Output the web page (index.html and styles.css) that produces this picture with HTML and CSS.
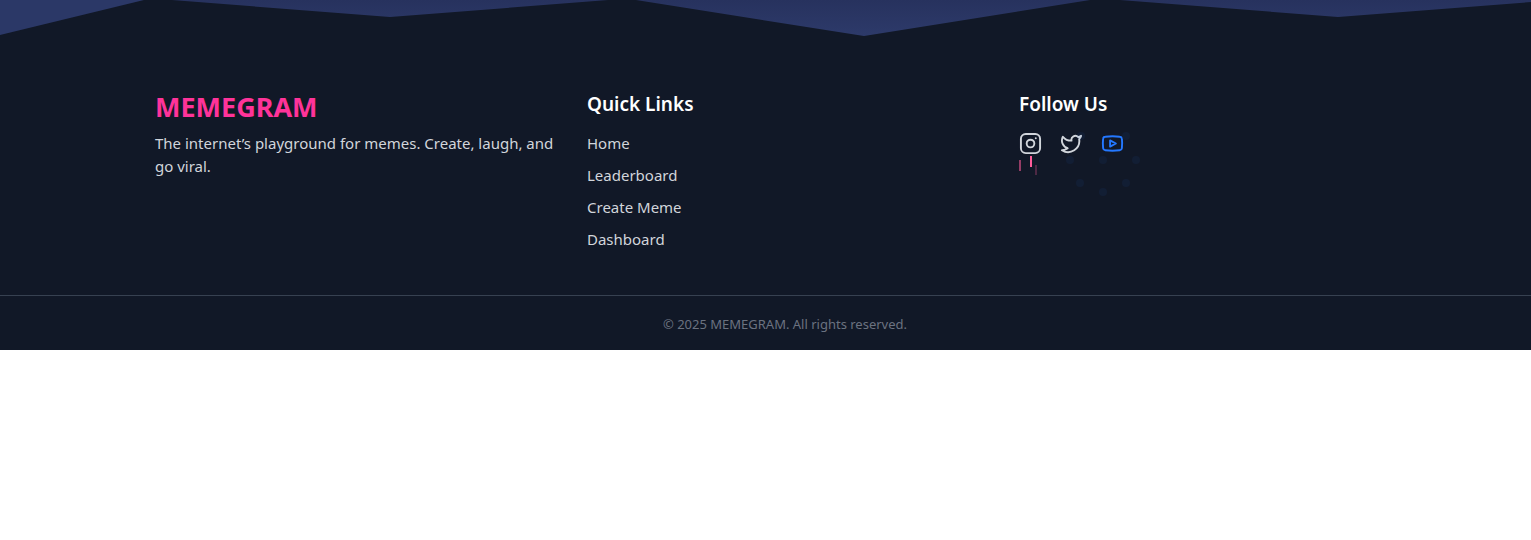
FILE: index.html
```html
<!DOCTYPE html>
<html lang="en">
<head>
<meta charset="utf-8">
<meta name="viewport" content="width=device-width, initial-scale=1">
<title>MEMEGRAM</title>
<link rel="stylesheet" href="styles.css">
</head>
<body>
<footer class="footer">
  <svg class="wave" viewBox="0 0 1531 50" preserveAspectRatio="none" aria-hidden="true">
    <defs>
      <linearGradient id="dusk" x1="0" y1="0" x2="0" y2="36" gradientUnits="userSpaceOnUse">
        <stop offset="0" stop-color="#27325e"/>
        <stop offset="1" stop-color="#2d3a6a"/>
      </linearGradient>
    </defs>
    <path fill="#2b3867" d="M0 0H144L0 35Z"/>
    <path fill="url(#dusk)" d="M172 0H608L390 17ZM636 0H1090L864 36ZM1120 0H1531V2L1338 17Z"/>
  </svg>
  <div class="columns">
    <section class="column">
      <h2 class="brand">MEMEGRAM</h2>
      <p class="tagline">The internet’s playground for memes. Create, laugh, and go viral.</p>
    </section>
    <nav class="column" aria-labelledby="links-title">
      <h3 class="title" id="links-title">Quick Links</h3>
      <ul class="links">
        <li><a href="#home">Home</a></li>
        <li><a href="#leaderboard">Leaderboard</a></li>
        <li><a href="#create">Create Meme</a></li>
        <li><a href="#dashboard">Dashboard</a></li>
      </ul>
    </nav>
    <section class="column">
      <h3 class="title">Follow Us</h3>
      <div class="social">
        <a class="social-link" href="#instagram" aria-label="Instagram">
          <svg class="icon" viewBox="0 0 24 24"><rect x="2" y="2" width="20" height="20" rx="5"/><circle cx="12" cy="12" r="4"/><path d="M17.5 6.500h.01"/></svg>
          <svg class="drips" viewBox="0 0 20 22" aria-hidden="true"><path d="M1 5V16" opacity=".55"/><path d="M12 1V12"/><path d="M17 10V20" opacity=".25"/></svg>
        </a>
        <a class="social-link" href="#twitter" aria-label="Twitter">
          <svg class="icon" viewBox="0 0 24 24"><path d="M22 4s-.7 2.1-2 3.4c1.6 10-9.4 17.3-18 11.6 2.2.1 4.4-.6 6-2C3 15.500.5 9.600 3 5c2.200 2.600 5.600 4.100 9 4-.9-4.200 4-6.600 7-3.800 1.100 0 3-1.200 3-1.200z"/></svg>
        </a>
        <a class="social-link active" href="#youtube" aria-label="YouTube">
          <svg class="icon" viewBox="0 0 24 24"><path d="M4.500 5Q12 4 19.500 5 21.600 5.200 21.800 7.200 22.400 12 21.800 16.800 21.600 18.800 19.500 19 12 20 4.500 19 2.400 18.800 2.200 16.800 1.600 12 2.200 7.200 2.400 5.200 4.500 5Z"/><path d="M9.500 8.800l6 3.200-6 3.200z"/></svg>
          <svg class="burst" viewBox="0 0 74 66" aria-hidden="true"><circle cx="15" cy="6" r="4"/><circle cx="60" cy="6" r="4"/><circle cx="4" cy="30" r="4"/><circle cx="37" cy="30" r="4"/><circle cx="70" cy="30" r="4"/><circle cx="14" cy="53" r="4"/><circle cx="60" cy="53" r="4"/><circle cx="37" cy="62" r="4"/></svg>
        </a>
      </div>
    </section>
  </div>
  <p class="legal">© 2025 MEMEGRAM. All rights reserved.</p>
</footer>
</body>
</html>
```
FILE: styles.css
```css
* { box-sizing: border-box; margin: 0; padding: 0; }
body {
  background: #fff;
  font-family: "Segoe UI", "Noto Sans", "Open Sans", sans-serif;
  font-size: 15px;
  line-height: 23px;
}
.footer { background: #111827; color: #d1d5db; }
.wave { display: block; width: 100%; height: 50px; }
.columns {
  display: grid;
  grid-template-columns: repeat(3, 1fr);
  gap: 30px;
  max-width: 1311px;
  margin: 0 auto;
  padding: 41px 0 44px 45px;
  width: 100%;
}
.brand { color: #ff3399; font-size: 27px; line-height: 32px; font-weight: 700; margin-bottom: 9px; }
.title { color: #fff; font-size: 19px; line-height: 26px; font-weight: 600; margin-bottom: 15px; }
.links { list-style: none; display: grid; gap: 9px; }
.links a { color: inherit; text-decoration: none; }
.social { display: flex; gap: 18px; }
.social-link { position: relative; display: block; color: #d1d5db; }
.active { color: #2478ff; }
.icon { display: block; width: 23px; height: 23px; fill: none; stroke: currentColor; stroke-width: 2; stroke-linecap: round; stroke-linejoin: round; }
.drips { position: absolute; left: 0; top: 23px; width: 20px; height: 22px; stroke: #ff5c9a; stroke-width: 2; }
.burst { position: absolute; left: -35px; top: -2px; width: 74px; height: 66px; fill: #2478ff; opacity: .06; }
.legal {
  border-top: 1px solid #374151;
  padding: 17px 0 14px 39px;
  text-align: center;
  color: #6b7280;
  font-size: 13px;
}
```
